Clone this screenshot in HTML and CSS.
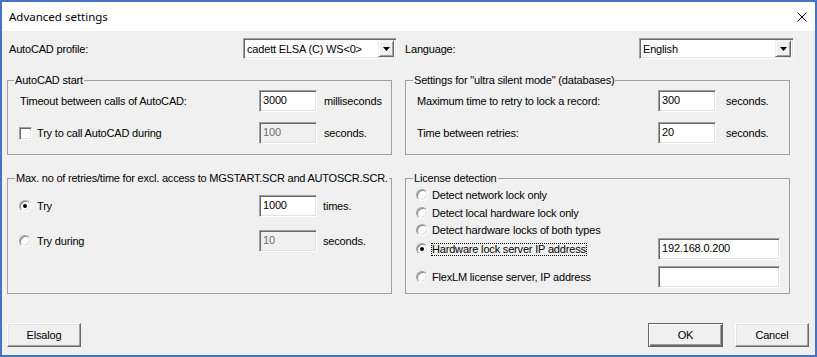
FILE: index.html
```html
<!DOCTYPE html>
<html>
<head>
<meta charset="utf-8">
<link rel="stylesheet" href="styles.css">
</head>
<body>
<div class="window">
  <div class="titlebar">
    <span class="title">Advanced settings</span>
    <svg class="close" viewBox="0 0 10 10" width="10" height="10"><path d="M0.5 0.5 L9.5 9.5 M9.5 0.5 L0.5 9.5" stroke="#000" stroke-width="1" fill="none"/></svg>
  </div>
  <div class="content">
    <div class="toprow">
      <span class="toplabel">AutoCAD profile:</span>
      <div class="combo combo-profile">
        <span class="combo-text">cadett ELSA (C) WS&lt;0&gt;</span>
        <span class="combo-btn"><svg viewBox="0 0 7 4" width="7" height="4"><path d="M0 0 H7 L3.5 4 Z" fill="#000"/></svg></span>
      </div>
      <span class="toplabel lang">Language:</span>
      <div class="combo combo-lang">
        <span class="combo-text">English</span>
        <span class="combo-btn"><svg viewBox="0 0 7 4" width="7" height="4"><path d="M0 0 H7 L3.5 4 Z" fill="#000"/></svg></span>
      </div>
    </div>

    <div class="groups groups-top">
      <fieldset class="group g-start">
        <legend>AutoCAD start</legend>
        <div class="row">
          <span class="label">Timeout between calls of AutoCAD:</span>
          <span class="field">3000</span>
          <span class="unit">milliseconds</span>
        </div>
        <div class="row">
          <span class="check"></span>
          <span class="label label-check">Try to call AutoCAD during</span>
          <span class="field disabled">100</span>
          <span class="unit">seconds.</span>
        </div>
      </fieldset>
      <fieldset class="group g-silent">
        <legend>Settings for "ultra silent mode" (databases)</legend>
        <div class="row">
          <span class="label">Maximum time to retry to lock a record:</span>
          <span class="field">300</span>
          <span class="unit">seconds.</span>
        </div>
        <div class="row">
          <span class="label">Time between retries:</span>
          <span class="field">20</span>
          <span class="unit">seconds.</span>
        </div>
      </fieldset>
    </div>

    <div class="groups groups-bottom">
      <fieldset class="group g-retry">
        <legend>Max. no of retries/time for excl. access to MGSTART.SCR and AUTOSCR.SCR.</legend>
        <div class="row">
          <span class="radio on"></span>
          <span class="label label-radio">Try</span>
          <span class="field">1000</span>
          <span class="unit">times.</span>
        </div>
        <div class="row">
          <span class="radio"></span>
          <span class="label label-radio">Try during</span>
          <span class="field disabled">10</span>
          <span class="unit">seconds.</span>
        </div>
      </fieldset>
      <fieldset class="group g-license">
        <legend>License detection</legend>
        <div class="lrow r-short">
          <span class="radio"></span>
          <span class="llabel">Detect network lock only</span>
        </div>
        <div class="lrow r-short">
          <span class="radio"></span>
          <span class="llabel">Detect local hardware lock only</span>
        </div>
        <div class="lrow r-third">
          <span class="radio"></span>
          <span class="llabel">Detect hardware locks of both types</span>
        </div>
        <div class="lrow r-field">
          <span class="radio on"></span>
          <span class="llabel"><span class="focus">Hardware lock server IP address</span></span>
          <span class="field wide">192.168.0.200</span>
        </div>
        <div class="lrow r-field r-last">
          <span class="radio"></span>
          <span class="llabel">FlexLM license server, IP address</span>
          <span class="field wide"></span>
        </div>
      </fieldset>
    </div>

    <div class="buttons">
      <span class="btn btn-elsalog">Elsalog</span>
      <span class="btn btn-ok">OK</span>
      <span class="btn btn-cancel">Cancel</span>
    </div>
  </div>
</div>
</body>
</html>
```

FILE: styles.css
```css
html, body {
  margin: 0;
  padding: 0;
}
body {
  font-family: "Liberation Sans", Arial, sans-serif;
  font-size: 11px;
  letter-spacing: -0.18px;
  color: #000;
  background: #f0f0f0;
}
.window {
  width: 817px;
  height: 357px;
  box-sizing: border-box;
  border: 2px solid #4673c3;
  display: flex;
  flex-direction: column;
  overflow: hidden;
}
.titlebar {
  flex: none;
  height: 29px;
  background: #fff;
  display: flex;
  align-items: center;
}
.title {
  font-family: "Noto Sans", "Liberation Sans", sans-serif;
  font-size: 11.5px;
  letter-spacing: 0;
  padding-left: 7px;
}
.close {
  margin-left: auto;
  margin-right: 8px;
  display: block;
}
.content {
  flex: 1;
  background: #f0f0f0;
}

/* top row */
.toprow {
  display: flex;
  align-items: center;
  padding: 7px 0 0 7px;
  height: 21px;
}
.toplabel {
  width: 234px;
  flex: none;
}
.toplabel.lang {
  margin-left: 8px;
}
.combo {
  flex: none;
  height: 21px;
  box-sizing: border-box;
  background: #fff;
  border: 1px solid;
  border-color: #a0a0a0 #fff #fff #a0a0a0;
  box-shadow: inset 1px 1px #696969, inset -1px -1px #e3e3e3;
  display: flex;
  align-items: center;
  padding: 2px;
}
.combo-profile { width: 154px; }
.combo-lang { width: 155px; }
.combo-text {
  flex: 1;
  padding-left: 1px;
}
.combo-btn {
  width: 16px;
  height: 17px;
  box-sizing: border-box;
  background: #f0f0f0;
  border: 1px solid;
  border-color: #f0f0f0 #696969 #696969 #f0f0f0;
  box-shadow: inset 1px 1px #fff, inset -1px -1px #a0a0a0;
  display: flex;
  align-items: center;
  justify-content: center;
}
.combo-btn svg { display: block; }

/* groups */
.groups {
  display: grid;
  grid-template-columns: 385px 385px;
  column-gap: 13px;
  margin-left: 5px;
}
.groups-top { margin-top: 15px; }
.groups-bottom { margin-top: 17px; }
.group {
  margin: 0;
  border: 1px solid #a0a0a0;
  padding: 0;
  min-width: 0;
}
.group legend {
  padding: 0 1px;
  margin-left: 7px;
  line-height: 13px;
  height: 13px;
  white-space: nowrap;
}
.g-start legend { margin-left: 6px; }
.g-retry legend { letter-spacing: -0.22px; }

.g-start { padding-top: 3px; padding-bottom: 10px; }
.g-silent { padding-top: 3px; padding-bottom: 10px; }
.g-retry { padding-top: 10px; }
.g-license { padding-top: 1px; padding-bottom: 5px; }

.row {
  display: flex;
  align-items: center;
  height: 22px;
}
.row + .row { margin-top: 10px; }
.g-retry .row + .row { margin-top: 13px; }

.g-start .row { padding-left: 12px; }
.g-silent .row { padding-left: 11px; }
.g-retry .row { padding-left: 11px; }
.g-license .lrow { padding-left: 10px; }

.g-start .label { width: 239px; }
.g-start .label-check { width: 222px; margin-left: 5px; }
.g-start .unit { margin-left: 7px; }
.g-silent .label { width: 241px; }
.g-silent .unit { margin-left: 10px; }
.g-retry .label-radio { width: 222px; margin-left: 6px; }
.g-retry .unit { margin-left: 6px; }

.field {
  flex: none;
  width: 58px;
  height: 22px;
  box-sizing: border-box;
  background: #fff;
  border: 1px solid;
  border-color: #a0a0a0 #fff #fff #a0a0a0;
  box-shadow: inset 1px 1px #696969, inset -1px -1px #e3e3e3;
  padding: 2px 3px 0 3px;
  line-height: 14px;
}
.field.disabled {
  background: #f0f0f0;
  color: #6d6d6d;
}
.field.wide { width: 122px; }

.check {
  flex: none;
  width: 13px;
  height: 13px;
  box-sizing: border-box;
  margin-left: -1px;
  background: #fff;
  border: 1px solid;
  border-color: #a0a0a0 #fff #fff #a0a0a0;
  box-shadow: inset 1px 1px #696969, inset -1px -1px #e3e3e3;
}
.radio {
  flex: none;
  position: relative;
  width: 12px;
  height: 12px;
  box-sizing: border-box;
  border-radius: 50%;
  background: #fff;
  border: 1px solid;
  border-color: #a0a0a0 #fff #fff #a0a0a0;
  box-shadow: inset 1px 1px #8a8a8a, inset -1px -1px #dcdcdc;
}
.radio.on::after {
  content: "";
  position: absolute;
  left: 3px;
  top: 3px;
  width: 4px;
  height: 4px;
  border-radius: 50%;
  background: #000;
}

/* license rows */
.lrow {
  display: flex;
  align-items: center;
}
.r-short { height: 18px; }
.r-third { height: 16px; }
.r-field { height: 22px; }
.r-last { margin-top: 6px; }
.llabel {
  margin-left: 4px;
  width: 226px;
  flex: none;
}
.focus {
  display: inline-block;
  margin-left: -1px;
  border: 1px dotted #000;
  line-height: 11px;
}

/* buttons */
.buttons {
  display: flex;
  margin-top: 29px;
  padding: 0 6px 0 5px;
}
.btn {
  flex: none;
  height: 24px;
  width: 74px;
  box-sizing: border-box;
  display: flex;
  align-items: center;
  justify-content: center;
  background: #f0f0f0;
  border: 1px solid;
  border-color: #fff #696969 #696969 #fff;
  box-shadow: inset -1px -1px #a0a0a0, inset 1px 1px #e3e3e3;
}
.btn-ok {
  margin-left: auto;
  width: 75px;
  border: 1px solid #646464;
  box-shadow: inset 1px 1px #fff, inset -1px -1px #696969, inset -2px -2px #a0a0a0;
}
.btn-cancel {
  margin-left: 12px;
}
```
